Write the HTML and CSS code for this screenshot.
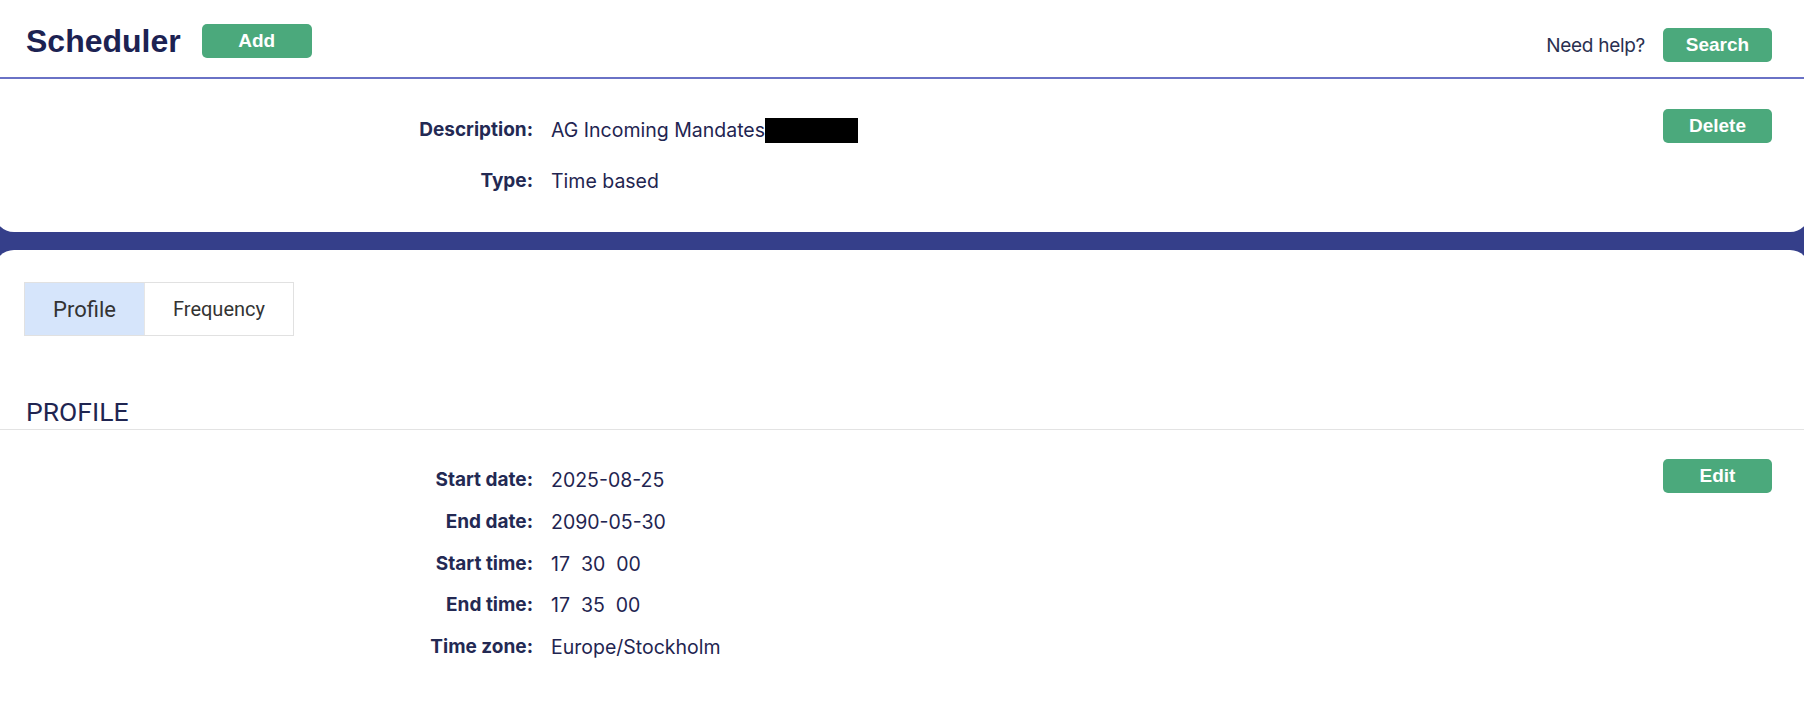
FILE: index.html
```html
<!DOCTYPE html>
<html lang="en">
<head>
<meta charset="utf-8">
<title>Scheduler</title>
<link rel="stylesheet" href="styles.css">
</head>
<body>
<div class="page">
  <div class="card card-top">
    <header class="header">
      <div class="header-left">
        <h1 class="title">Scheduler</h1>
        <button class="btn btn-add">Add</button>
      </div>
      <div class="header-right">
        <span class="help">Need help?</span>
        <button class="btn">Search</button>
      </div>
    </header>
    <section class="section section-info">
      <div class="fields fields-info">
        <div class="label">Description:</div>
        <div class="value">AG Incoming Mandates<span class="redact"></span></div>
        <div class="label">Type:</div>
        <div class="value">Time based</div>
      </div>
      <div class="actions">
        <button class="btn">Delete</button>
      </div>
    </section>
  </div>
  <div class="card card-bottom">
    <div class="tabs">
      <div class="tab tab-active">Profile</div>
      <div class="tab">Frequency</div>
    </div>
    <h2 class="section-title">PROFILE</h2>
    <section class="section section-profile">
      <div class="fields fields-profile">
        <div class="label">Start date:</div>
        <div class="value">2025-08-25</div>
        <div class="label">End date:</div>
        <div class="value">2090-05-30</div>
        <div class="label">Start time:</div>
        <div class="value">17&nbsp;&nbsp;30&nbsp;&nbsp;00</div>
        <div class="label">End time:</div>
        <div class="value">17&nbsp;&nbsp;35&nbsp;&nbsp;00</div>
        <div class="label">Time zone:</div>
        <div class="value">Europe/Stockholm</div>
      </div>
      <div class="actions">
        <button class="btn">Edit</button>
      </div>
    </section>
  </div>
</div>
</body>
</html>
```

FILE: styles.css
```css
html, body {
  margin: 0;
  padding: 0;
}
body {
  background: #353f8a;
  overflow: hidden;
  width: 1804px;
  height: 703px;
  font-family: Inter, "Liberation Sans", sans-serif;
  color: #1f2551;
}
.page {
  margin: 0 -6px;
}
.card {
  background: #ffffff;
  padding: 0 6px;
}
.card-top {
  border-radius: 0 0 20px 20px;
  height: 232px;
  box-sizing: border-box;
  margin-bottom: 18px;
}
.card-bottom {
  border-radius: 20px 20px 0 0;
  height: 460px;
  padding-top: 32px;
  box-sizing: border-box;
}
.header {
  height: 79px;
  box-sizing: border-box;
  border-bottom: 2px solid #6a72c6;
  display: flex;
  justify-content: space-between;
  align-items: flex-start;
  padding: 0 32px 0 26px;
}
.header-left {
  display: flex;
  align-items: center;
  gap: 21px;
  margin-top: 24px;
}
.title {
  margin: 0;
  font-family: "Liberation Sans", Arial, sans-serif;
  font-weight: 700;
  font-size: 32px;
  line-height: 34px;
  color: #1c2252;
}
.header-right {
  display: flex;
  align-items: center;
  gap: 18px;
  margin-top: 28px;
}
.help {
  font-family: Inter, sans-serif;
  font-size: 19px;
  color: #2a3050;
  letter-spacing: -0.3px;
}
.btn {
  border: none;
  background: #4ba97c;
  color: #ffffff;
  font-family: "Liberation Sans", Arial, sans-serif;
  font-weight: 700;
  font-size: 19px;
  height: 34px;
  width: 109px;
  border-radius: 5px;
  padding: 0;
  cursor: pointer;
}
.btn-add {
  width: 110px;
}
.section {
  display: flex;
  padding: 0 32px 0 26px;
}
.section-info {
  padding-top: 30px;
}
.section-profile {
  padding-top: 29px;
}
.fields {
  flex: 1;
  display: grid;
  grid-template-columns: 507px 1fr;
  column-gap: 18px;
  margin-top: 9px;
  font-size: 19.5px;
  line-height: 24px;
}
.fields-info {
  row-gap: 26px;
}
.fields-profile {
  row-gap: 17.75px;
}
.label {
  text-align: right;
  font-weight: 700;
  font-size: 19px;
  color: #232953;
}
.value {
  font-weight: 400;
  color: #1f2551;
}
.redact {
  display: inline-block;
  width: 93px;
  height: 25px;
  background: #000000;
  vertical-align: -6px;
}
.actions {
  width: 109px;
}
.tabs {
  display: flex;
  margin-left: 24px;
  width: max-content;
  border: 1px solid #e1e1e1;
}
.tab {
  height: 52px;
  display: flex;
  align-items: center;
  justify-content: center;
  font-family: Roboto, sans-serif;
  font-size: 20px;
  color: #333333;
  background: #ffffff;
  width: 148px;
}
.tab-active {
  background: #d6e5fb;
  font-size: 22px;
  width: 119px;
  border-right: 1px solid #e6e6e6;
}
.section-title {
  margin: 61px -6px 0 -6px;
  padding: 0 0 2px 32px;
  font-family: Roboto, sans-serif;
  font-weight: 400;
  font-size: 26.5px;
  line-height: 30px;
  color: #1f2551;
  border-bottom: 1px solid #e3e3e3;
}
```
